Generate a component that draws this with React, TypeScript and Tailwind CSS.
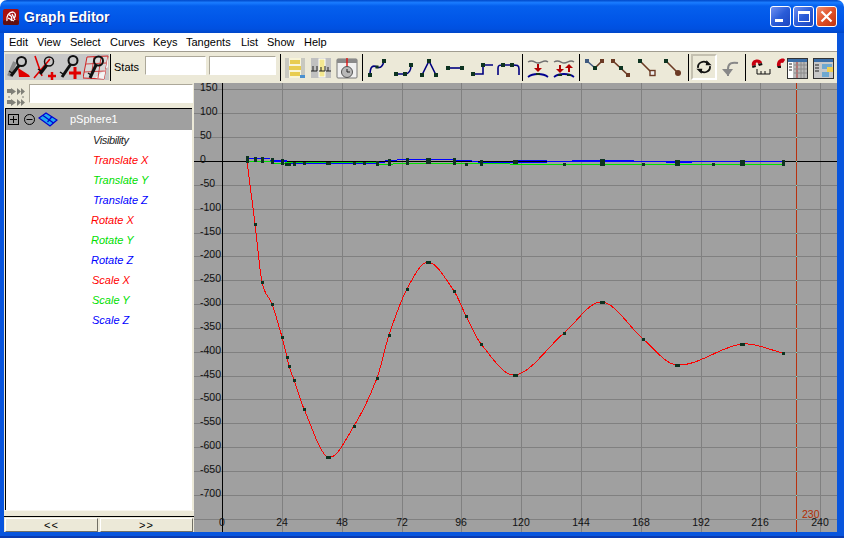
import React from 'react';

const KEY = '#0d3320';
const NAVY = '#000080';

// key frames of the red curve, read off the screen
const redKeys: [number, number][] = [
  [247, 161], [255, 224], [262, 282], [272, 304], [282, 337], [287, 357], [289, 366], [294, 380],
  [304, 409], [328, 457], [354, 426], [377, 378], [389, 335], [407, 289], [428, 262], [454, 291],
  [466, 316], [481, 344], [515, 375], [564, 333], [602, 302], [643, 339], [677, 365], [742, 344], [783, 353],
];

// x, y, w, h of the keys along the flat curves
const flatKeys: [number, number, number, number][] = [
  [246, 156, 3, 7], [254, 157, 3, 5], [261, 157, 3, 6], [271, 158, 3, 6], [281, 159, 3, 6], [285, 163, 6, 3],
  [293, 162, 3, 4], [303, 162, 3, 3], [326, 162, 5, 3], [353, 162, 3, 3], [363, 162, 3, 3], [376, 161, 3, 5],
  [388, 159, 3, 7], [406, 158, 3, 7], [426, 158, 5, 6], [453, 158, 3, 7], [465, 163, 3, 3], [480, 160, 3, 6],
  [513, 160, 5, 4], [563, 163, 3, 3], [600, 159, 5, 7], [642, 163, 3, 3], [675, 160, 5, 6], [712, 163, 3, 3],
  [740, 160, 5, 6], [782, 160, 3, 6],
];

// hermite through the keys, tangents by neighbour slope so x never runs back
function smoothPath(pts: [number, number][]) {
  const slope = (i: number) => {
    const a = pts[Math.max(i - 1, 0)];
    const b = pts[Math.min(i + 1, pts.length - 1)];
    return (b[1] - a[1]) / (b[0] - a[0]);
  };
  let d = `M${pts[0][0]} ${pts[0][1]}`;
  for (let i = 0; i < pts.length - 1; i++) {
    const p1 = pts[i];
    const p2 = pts[i + 1];
    const dx = (p2[0] - p1[0]) / 3;
    d += ` C${p1[0] + dx} ${p1[1] + slope(i) * dx} ${p2[0] - dx} ${p2[1] - slope(i + 1) * dx} ${p2[0]} ${p2[1]}`;
  }
  return d;
}

const vLines = [282, 342, 402, 461, 521, 581, 641, 701, 760, 820];
const xLabels = [[222, '0'], [282, '24'], [342, '48'], [402, '72'], [461, '96'], [521, '120'], [581, '144'], [641, '168'], [701, '192'], [760, '216'], [820, '240']] as const;
const yLines = [
  [89, '150'], [113, '100'], [137, '50'], [161, '0'], [185, '-50'], [209, '-100'], [233, '-150'], [256, '-200'], [280, '-250'],
  [304, '-300'], [328, '-350'], [352, '-400'], [376, '-450'], [399, '-500'], [423, '-550'], [447, '-600'], [471, '-650'], [495, '-700'], [519, ''],
] as const;

function Graph() {
  return (
    <svg viewBox="194 83 643 449" className="block w-[643px] h-[449px] bg-[#a0a0a0] text-[10.5px]">
      <g shapeRendering="crispEdges">
        {yLines.map(([y]) => <line key={y} x1={194} x2={837} y1={y + 0.5} y2={y + 0.5} stroke="#808080" />)}
        {vLines.map((x) => <line key={x} x1={x + 0.5} x2={x + 0.5} y1={83} y2={532} stroke="#808080" />)}
        <line x1={222.5} x2={222.5} y1={83} y2={532} stroke="#000" />
        <line x1={194} x2={837} y1={161.5} y2={161.5} stroke="#000" />
        <path d="M247 161.5H270M270 161.5H287M287 163.5H365M365 163.5H378M378 162.5H385M385 160.5H397M397 159.5H454M454 160.5H472M472 161.5H478M478 162.5H547" stroke="#0000ff" fill="none" />
        <path d="M247 158.5H270M270 160.5H287M388 160.5H397M515 160.5H547M572 160.5H634M666 162.5H692" stroke="#0000ff" fill="none" />
        <path d="M547 161.5H783" stroke="#0000ff" fill="none" />
        <path d="M247 161.5H273M273 163.5H285M285 162.5H368M368 162.5H377M377 164.5H393M393 163.5H510M510 164.5H783" stroke="#00e000" fill="none" />
        <path d={smoothPath(redKeys)} stroke="#ff0000" fill="none" />
        {redKeys.slice(1).map(([x, y]) => {
          const wide = y === 457 || y === 262 || y === 375 || y === 302 || y === 365 || (y === 344 && x === 742);
          return <rect key={x} x={wide ? x - 2 : x - 1} y={y - 1} width={wide ? 5 : 3} height={3} fill={KEY} />;
        })}
        {flatKeys.map(([x, y, w, h]) => <rect key={x} x={x} y={y} width={w} height={h} fill={KEY} />)}
        <line x1={796.5} x2={796.5} y1={83} y2={532} stroke="#b8310f" />
        {yLines.map(([y]) => <rect key={y} x={796} y={y} width={1} height={1} fill="#7fe0c0" />)}
      </g>
      {yLines.map(([y, t]) => <text key={y} x={200} y={y + 2} fill="#111">{t}</text>)}
      {xLabels.map(([x, t]) => <text key={x} x={x} y={526} textAnchor="middle" fill="#111">{t}</text>)}
      <text x={802} y={518} fill="#b22c00">230</text>
    </svg>
  );
}

function KeyShape({ x, y, tx, ty, thin }: { x: number; y: number; tx: number; ty: number; thin?: boolean }) {
  return (
    <g fill="none" stroke="#111">
      <circle cx={x} cy={y} r={4.5} strokeWidth={thin ? 1.5 : 2} />
      <path d={`M${x - 2.5} ${y + 4}L${tx} ${ty}`} strokeWidth={3} />
      <path d={`M${tx + 1} ${ty - 3}l-3 -2`} strokeWidth={1.5} />
    </g>
  );
}

function Icon({ children, className }: { children: React.ReactNode; className?: string }) {
  return (
    <svg viewBox="0 0 26 26" className={`block w-[26px] h-[26px] shrink-0 ${className ?? ''}`}>
      {children}
    </svg>
  );
}

function Sq({ x, y, c = KEY, s = 4 }: { x: number; y: number; c?: string; s?: number }) {
  return <rect x={x - s / 2} y={y - s / 2} width={s} height={s} fill={c} />;
}

function Curve({ d }: { d: string }) {
  return <path d={d} fill="none" stroke={NAVY} strokeWidth={1.6} />;
}

function Sep() {
  return <div className="w-px h-[27px] bg-black shrink-0" />;
}

function Field({ className }: { className: string }) {
  return <input readOnly className={`h-[19px] bg-white border border-[#aca899] border-r-white border-b-white shadow-[inset_1px_1px_0_#ffffff] shrink-0 ${className}`} />;
}

function KeyIcons() {
  return (
    <div className="flex shrink-0">
      <Icon className="bg-[#c8c8c8]">
        <path d="M10 8L4 22" stroke="#8a8a8a" strokeWidth={4} />
        <KeyShape x={16.5} y={7.5} tx={6} ty={22} />
        <path d="M13 14L24 21L25 23H14Z" fill="#e00000" />
      </Icon>
      <Icon className="bg-[#c8c8c8]">
        <path d="M4 2L11 22M19 5L3 24" stroke="#e00000" strokeWidth={1.6} fill="none" />
        <KeyShape x={18} y={7.5} tx={9} ty={20} thin />
        <path d="M21 18V26M17 22H25" stroke="#e00000" strokeWidth={2.5} />
      </Icon>
      <Icon className="bg-[#c8c8c8]">
        <KeyShape x={16} y={6.5} tx={5} ty={23} />
        <path d="M18 13V25M12 19H24" stroke="#e00000" strokeWidth={3} />
      </Icon>
      <Icon className="bg-[#c8c8c8]">
        <path d="M4 3L25 2L21 25L0 24Z" fill="#d8d8d8" stroke="#d02020" />
        <path d="M12 24L25 13V2L21 25Z" fill="#f4f4f4" />
        <path d="M3 10L23 9M1 18L22 17M11 3L8 24M18 3L15 24" stroke="#d02020" strokeWidth={0.8} />
        <KeyShape x={15.5} y={7} tx={7} ty={24} />
      </Icon>
    </div>
  );
}

function ViewIcons() {
  return (
    <>
      <Icon>
        <rect x={3} y={4} width={20} height={20} fill="#c8c8c0" />
        <rect x={7} y={4} width={12} height={20} fill="#f8f4d8" />
        <path d="M8 8H18M7 14H19M8 20H18" stroke="#e8cc50" strokeWidth={4} />
        <rect x={18} y={21} width={5} height={3} fill="#4a90d0" />
      </Icon>
      <Icon>
        <rect x={3} y={4} width={20} height={20} fill="#c0c0c0" />
        <rect x={11} y={5} width={6} height={18} fill="#f4e890" stroke="#fff" />
        <path d="M5 12V17M3 17H9M9 12V17M13 13V17M11 17H17M17 12V17M20 13V17M18 17H23" stroke="#222" fill="none" />
      </Icon>
      <Icon>
        <rect x={3} y={5} width={20} height={19} rx={1} fill="#f0f0f0" stroke="#777" />
        <rect x={3} y={5} width={20} height={4} fill="#8a8a8a" />
        <line x1={13} x2={13} y1={4} y2={18} stroke="#e01010" strokeWidth={1.4} />
        <circle cx={13} cy={18} r={5.5} fill="#b8b8b8" stroke="#555" />
        <path d="M13 15V18H16" stroke="#222" fill="none" />
      </Icon>
    </>
  );
}

function CurveIcons() {
  return (
    <>
      <Icon><Curve d="M5 21C5 12 8 11 12 13C16 15 18 11 19 7" /><Sq x={5} y={21} /><Sq x={12} y={13} s={3} /><Sq x={19} y={7} /></Icon>
      <Icon><Curve d="M5 20H14C18 20 20 16 20 11" /><Sq x={5} y={20} /><Sq x={14} y={20} /><Sq x={20} y={11} /></Icon>
      <Icon><Curve d="M5 21L12 7L19 21" /><Sq x={5} y={21} /><Sq x={12} y={7} /><Sq x={19} y={21} /></Icon>
      <Icon><Curve d="M5 14H19" /><Sq x={5} y={14} /><Sq x={19} y={14} /></Icon>
      <Icon><Curve d="M4 20H14V11H24" /><Sq x={4} y={20} /><Sq x={14} y={11} /></Icon>
      <Icon><Curve d="M3 21V14C3 11 5 11 8 11H18C22 11 24 11 24 15V21" /><Sq x={8} y={11} /><Sq x={17} y={11} /></Icon>
    </>
  );
}

function BreakIcons() {
  return (
    <>
      <Icon>
        <path d="M3 8C8 5 10 9 13 9C17 9 19 5 23 8" stroke="#707070" strokeWidth={1.4} fill="none" />
        <path d="M13 10V15" stroke="#b00000" strokeWidth={2} />
        <path d="M9 14H17L13 18Z" fill="#b00000" />
        <path d="M3 23C8 19 18 19 23 23" stroke="#000090" strokeWidth={1.8} fill="none" />
        <rect x={11} y={19} width={4} height={2} fill={KEY} />
      </Icon>
      <Icon>
        <path d="M3 8C8 5 10 9 13 9C17 9 19 5 23 8" stroke="#707070" strokeWidth={1.4} fill="none" />
        <path d="M9 11V16M18 13V18" stroke="#b00000" strokeWidth={2} />
        <path d="M5 15H13L9 19Z M14 14H22L18 10Z" fill="#b00000" />
        <path d="M3 23C8 19 18 19 23 23" stroke="#000090" strokeWidth={1.8} fill="none" />
        <rect x={7} y={20} width={4} height={2} fill={KEY} />
        <rect x={16} y={20} width={4} height={2} fill={KEY} />
      </Icon>
    </>
  );
}

function TangentIcons() {
  const brown = '#6b3a24';
  return (
    <>
      <Icon>
        <path d="M4 7L12 14" stroke="#3f5a80" strokeWidth={1.6} /><path d="M12 14L19 7" stroke={brown} strokeWidth={1.6} />
        <Sq x={4} y={7} c="#3f5a80" /><Sq x={12} y={14} /><Sq x={19} y={7} c={brown} />
      </Icon>
      <Icon>
        <path d="M4 7L19 21" stroke={brown} strokeWidth={1.6} />
        <Sq x={4} y={7} c={brown} /><Sq x={12} y={14} /><Sq x={19} y={21} c={brown} />
      </Icon>
      <Icon>
        <path d="M5 7L17 19" stroke={brown} strokeWidth={1.6} />
        <Sq x={5} y={7} /><rect x={15} y={16.5} width={5} height={5} fill="#eee" stroke={brown} strokeWidth={1.4} />
      </Icon>
      <Icon>
        <path d="M5 7L17 19" stroke={brown} strokeWidth={1.6} />
        <Sq x={5} y={7} /><circle cx={17} cy={19} r={3} fill={brown} />
      </Icon>
    </>
  );
}

function WindowButton({ close, children }: { close?: boolean; children: React.ReactNode }) {
  return (
    <div className={`w-[21px] h-[21px] rounded-[3px] border border-white flex items-center justify-center shrink-0 ${close ? 'bg-[linear-gradient(135deg,#f09070,#e05028_50%,#c03410)]' : 'bg-[linear-gradient(135deg,#7090f0,#2a5cd8_50%,#1c46c0)]'}`}>
      {children}
    </div>
  );
}

function TitleBar() {
  return (
    <div className="h-[33px] shrink-0 rounded-t-[7px] flex items-center bg-[linear-gradient(180deg,#0048c8_0%,#1a7cff_8%,#0560ee_18%,#0054e6_70%,#0050e0_88%,#0046c8_100%)] pl-[3px] pr-[7px]">
      <svg viewBox="0 0 16 16" className="block w-4 h-4 shrink-0">
        <rect width={16} height={16} rx={2} fill="#a81010" />
        <rect x={0} y={11} width={16} height={5} rx={2} fill="#601010" />
        <path d="M4 12C3 7 6 3 10 3C13 4 13 7 11 9M6 6C8 6 10 9 8 12M5 9L11 12M9 5L12 11" stroke="#fff" strokeWidth={1.3} fill="none" />
      </svg>
      <span className="ml-[5px] pt-px text-white font-bold text-[14px] [text-shadow:1px_1px_#0f2a90]">Graph Editor</span>
      <div className="ml-auto flex gap-[2px]">
        <WindowButton><div className="w-[8px] h-[3px] bg-white mt-[8px] -ml-[3px]" /></WindowButton>
        <WindowButton><div className="w-[12px] h-[11px] border border-white border-t-[3px]" /></WindowButton>
        <WindowButton close>
          <svg viewBox="0 0 13 13" className="block w-[13px] h-[13px]"><path d="M1.5 1.5L11.5 11.5M11.5 1.5L1.5 11.5" stroke="#fff" strokeWidth={2.2} /></svg>
        </WindowButton>
      </div>
    </div>
  );
}

const menus = [
  ['Edit', 'w-[28px]'], ['View', 'w-[33px]'], ['Select', 'w-[40px]'], ['Curves', 'w-[43px]'], ['Keys', 'w-[33px]'],
  ['Tangents', 'w-[55px]'], ['List', 'w-[26px]'], ['Show', 'w-[37px]'], ['Help', 'w-[30px]'],
];

function MenuBar() {
  return (
    <div className="h-[19px] shrink-0 bg-white border-b border-[#a09c90] flex items-center pl-[5px] pt-px text-[11px] text-black">
      {menus.map(([name, w]) => <span key={name} className={w}>{name}</span>)}
    </div>
  );
}

function Toolbar() {
  return (
    <div className="h-[31px] shrink-0 bg-[#ece9d8] flex items-start pt-[2px] pl-px">
      <KeyIcons />
      <div className="ml-px"><Sep /></div>
      <span className="ml-[3px] w-[31px] shrink-0 text-[11px] leading-[26px] text-black">Stats</span>
      <Field className="w-[61px] mt-[2px]" />
      <Field className="w-[67px] ml-[3px] mt-[2px]" />
      <div className="ml-[4px]"><Sep /></div>
      <div className="ml-px flex shrink-0"><ViewIcons /></div>
      <div className="ml-[2px]"><Sep /></div>
      <div className="ml-[2px] flex shrink-0"><CurveIcons /></div>
      <div className="ml-px"><Sep /></div>
      <div className="ml-[2px] flex shrink-0"><BreakIcons /></div>
      <div className="ml-[2px]"><Sep /></div>
      <div className="ml-[3px] flex shrink-0"><TangentIcons /></div>
      <div className="ml-px"><Sep /></div>
      <div className="ml-[2px] flex shrink-0">
        <Icon className="border-2 border-t-[#c4c0b0] border-l-[#c4c0b0] border-r-white border-b-white">
          <path d="M6 14C5 8 13 4 18 9M20 12C21 18 13 22 8 17" fill="none" stroke="#111" strokeWidth={2.2} />
          <path d="M16 5L22 11L15 11Z M10 21L4 15L11 15Z" fill="#111" />
        </Icon>
        <Icon>
          <path d="M11 22V15C11 9 15 8 21 9" fill="none" stroke="#888" strokeWidth={2} />
          <path d="M5 15H16L11 22Z" fill="#888" />
        </Icon>
      </div>
      <div className="ml-[2px]"><Sep /></div>
      <div className="ml-px shrink-0">
        <Icon>
          <path d="M5 12C3 4 15 4 15 9L11 10C11 8 8 8 9 11Z" fill="#c80010" />
          <path d="M5 12L8.5 11L9 13L5.5 14ZM15 9L11 10L12 12L15.5 11Z" fill="#111" />
          <path d="M10 15V20H23V15M14 17V20M18 17V20" fill="none" stroke="#111" />
        </Icon>
      </div>
      <div className="ml-[3px] shrink-0">
        <svg viewBox="0 0 32 26" className="block w-[32px] h-[26px]">
          <path d="M1 12C0 4 9 3 9 6L7 9C5 8 4 9 5 12Z" fill="#c80010" />
          <path d="M1 12H5V14H2Z" fill="#111" />
          <rect x={11.5} y={4.5} width={20} height={20} fill="#b8b8b8" stroke="#333" />
          <rect x={12} y={5} width={19} height={3} fill="#3a6ea8" />
          <rect x={12} y={8} width={5} height={16} fill="#fff" />
          <path d="M13 10H16M13 13H16M13 16H16" stroke="#222" />
          <path d="M21 8V24" stroke="#b03030" />
          <path d="M18 11H31M18 15H31M18 19H31M25 8V24M28 8V24" stroke="#8a8a8a" />
        </svg>
      </div>
      <div className="ml-[2px]">
        <Icon>
          <rect x={3.5} y={4.5} width={20} height={20} fill="#c8c8c8" stroke="#333" />
          <rect x={4} y={5} width={19} height={3} fill="#3a6ea8" />
          <rect x={12} y={10} width={10} height={5} fill="#6ea8d0" />
          <rect x={17} y={13} width={6} height={5} fill="#f0d050" />
          <rect x={12} y={18} width={7} height={5} fill="#6ea8d0" />
          <path d="M5 11H9M5 14H9M5 17H9" stroke="#222" />
        </Icon>
      </div>
    </div>
  );
}

const channels = [
  { name: 'Visibility', color: 'text-[#222222] tracking-[-0.4px]', pad: 'pl-[87px]' },
  { name: 'Translate X', color: 'text-[#ff0000]', pad: 'pl-[87px]' },
  { name: 'Translate Y', color: 'text-[#00e000]', pad: 'pl-[87px]' },
  { name: 'Translate Z', color: 'text-[#0000ff]', pad: 'pl-[87px]' },
  { name: 'Rotate X', color: 'text-[#ff0000]', pad: 'pl-[85px]' },
  { name: 'Rotate Y', color: 'text-[#00e000]', pad: 'pl-[85px]' },
  { name: 'Rotate Z', color: 'text-[#0000ff]', pad: 'pl-[85px]' },
  { name: 'Scale X', color: 'text-[#ff0000]', pad: 'pl-[86px]' },
  { name: 'Scale Y', color: 'text-[#00e000]', pad: 'pl-[86px]' },
  { name: 'Scale Z', color: 'text-[#0000ff]', pad: 'pl-[86px]' },
];

function OutlinerPanel() {
  return (
    <div className="w-[190px] shrink-0 bg-[#ece9d8] flex flex-col">
      <div className="h-[25px] shrink-0 flex items-start pl-[3px]">
        <svg viewBox="0 0 18 18" className="block w-[18px] h-[18px] mt-[5px] shrink-0">
          <path d="M0 1H4V0L9 3.5L4 7V5H0ZM10 0L14 3.5L10 7ZM14 0L18 3.5L14 7ZM0 12H4V11L9 14.5L4 18V16H0ZM10 11L14 14.5L10 18ZM14 11L18 14.5L14 18Z" fill="#808078" />
          <path d="M2 8V10M16 8V10" stroke="#808078" />
        </svg>
        <input readOnly className="ml-[4px] mt-px w-[164px] h-[19px] bg-white border border-[#aca899] border-r-white border-b-white" />
      </div>
      <div className="flex-1 min-h-0 ml-px mr-[2px] bg-white border-t border-l border-black flex flex-col">
        <div className="h-[21px] shrink-0 bg-[#a0a0a0] flex items-center pl-[2px]">
          <svg viewBox="0 0 11 11" className="block w-[11px] h-[11px] shrink-0">
            <rect x={0.5} y={0.5} width={10} height={10} fill="none" stroke="#000" />
            <path d="M5.5 2V9M2 5.5H9" stroke="#000" />
          </svg>
          <svg viewBox="0 0 11 11" className="block w-[11px] h-[11px] ml-[5px] shrink-0">
            <circle cx={5.5} cy={5.5} r={5} fill="none" stroke="#000" />
            <path d="M2.5 5.5H8.5" stroke="#000" />
          </svg>
          <svg viewBox="0 0 20 15" className="block w-5 h-[15px] ml-[3px] shrink-0">
            <path d="M1 6L8 1L19 8L12 14Z" fill="#20a8f0" stroke="#0000d0" strokeWidth={1.2} />
            <path d="M5 3.5L15.5 11M9.5 10L14 4.5" stroke="#0000d0" strokeWidth={1.2} />
          </svg>
          <span className="ml-[12px] text-[11px] text-white">pSphere1</span>
        </div>
        {channels.map((c) => (
          <div key={c.name} className={`h-[20px] shrink-0 flex items-center italic text-[11px] ${c.color} ${c.pad}`}>{c.name}</div>
        ))}
      </div>
      <div className="h-[6px] shrink-0 border-t border-[#f8f6ee] border-b-0" />
      <div className="h-px shrink-0 bg-black" />
      <div className="h-[15px] shrink-0 flex gap-[2px] pt-px pl-px">
        <button className="w-[93px] h-[14px] bg-[#ece9d8] border border-white border-r-[#716f64] border-b-[#716f64] text-[11px] leading-[12px] text-black tracking-[1px]">&lt;&lt;</button>
        <button className="w-[93px] h-[14px] bg-[#ece9d8] border border-white border-r-[#716f64] border-b-[#716f64] text-[11px] leading-[12px] text-black tracking-[1px]">&gt;&gt;</button>
      </div>
    </div>
  );
}

export default function App() {
  return (
    <div className="w-[844px] h-[538px] flex flex-col overflow-hidden bg-white font-['Liberation_Sans',sans-serif]">
      <TitleBar />
      <div className="flex-1 min-h-0 flex flex-col bg-[#0855dd] pl-[4px] pr-[7px] pb-[6px] shadow-[inset_0_-2px_0_#0a3ab0]">
        <MenuBar />
        <Toolbar />
        <div className="flex-1 min-h-0 flex">
          <OutlinerPanel />
          <Graph />
        </div>
      </div>
    </div>
  );
}
